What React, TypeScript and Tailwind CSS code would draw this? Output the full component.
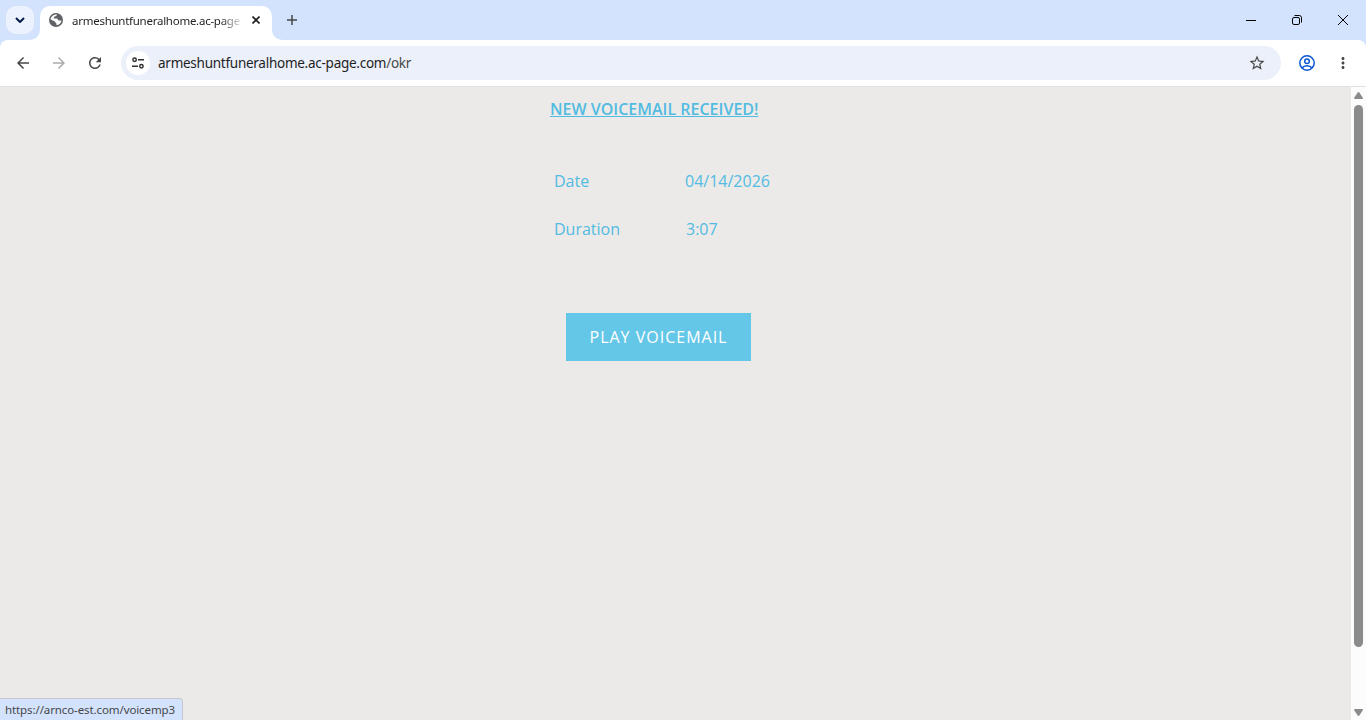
import {
  MdArrowBack,
  MdArrowForward,
  MdMoreVert,
  MdRefresh,
  MdStarOutline,
} from "react-icons/md";

type Voicemail = {
  date: string;
  duration: string;
};

const voicemail: Voicemail = {
  date: "04/14/2026",
  duration: "3:07",
};

function GlobeIcon() {
  return (
    <svg className="mt-1.5 size-4 shrink-0" viewBox="0 0 16 16">
      <circle cx="8" cy="8" r="7" fill="#5f6368" />
      <path
        d="M9 2.600C8.800 4 7.800 4.300 6.600 4.600C5.700 5 6.100 6 5.500 6.600H8.600C10 6.700 9.600 8.200 10.800 8.400H13.400C13.200 10.800 11.200 13 8.500 13.300V12C8.500 11 7.600 11.200 7.300 10.300C7 9.300 6 8.800 4.600 8.500L2.600 7.200C2.900 4.800 5.400 2.400 9 2.600z"
        fill="#fff"
      />
      <path d="M9.500 3C11.500 3.600 13 5.300 13.300 7H11.200C10.400 6.600 11 5.800 10 5.500C8.800 5 9.300 3.800 9.500 3z" fill="#5f6368" />
    </svg>
  );
}

function TabStrip() {
  return (
    <div className="flex h-10 bg-[#d3e3fd] pl-1.5 pt-1.5">
      <div className="flex size-7 items-center justify-center rounded-[10px] bg-[#ecf2fe]">
        <svg width="10" height="6" viewBox="0 0 10 6" fill="none" stroke="#041e49" strokeWidth="2">
          <path d="M1 1l4 4 4-4" />
        </svg>
      </div>
      <div className="relative ml-1.5 flex h-[34px] w-[232px] rounded-t-[10px] bg-white pl-2">
        <svg className="absolute -left-2.5 bottom-0 fill-white" width="10" height="10">
          <path d="M10 0v10H0A10 10 0 0 0 10 0z" />
        </svg>
        <svg className="absolute -right-2.5 bottom-0 fill-white" width="10" height="10">
          <path d="M0 0v10h10A10 10 0 0 1 0 0z" />
        </svg>
        <GlobeIcon />
        <div className="ml-2 w-[168px] mask-r-from-[148px] mask-r-to-[172px] whitespace-nowrap text-[11.5px] leading-[29px] tracking-[-0.26px] text-[#1f1f1f]">
          armeshuntfuneralhome.ac-page
        </div>
        <svg className="ml-[12px] mt-2.5" width="8" height="8" viewBox="0 0 8 8" stroke="#1f1f1f" strokeWidth="1.6">
          <path d="M.5.5l7 7m0-7l-7 7" />
        </svg>
      </div>
      <svg className="ml-[15px] mt-[9px]" width="10" height="10" stroke="#474747" strokeWidth="1.5">
        <path d="M5 0v10M0 5h10" />
      </svg>
      <div className="ml-auto flex items-start gap-9 pr-[18px] pt-[9px]">
        <svg width="10" height="10" stroke="#000">
          <path d="M0 5.5h10" />
        </svg>
        <svg width="10" height="10" fill="none" stroke="#000">
          <rect x=".5" y="2.5" width="7" height="7" rx="1.5" />
          <path d="M2.5.5h4.8a2.2 2.2 0 0 1 2.2 2.2v4.8" />
        </svg>
        <svg width="10" height="10" stroke="#000">
          <path d="M0 0l10 10M10 0L0 10" />
        </svg>
      </div>
    </div>
  );
}

function Toolbar() {
  return (
    <div className="bg-[#d3e3fd]">
      <div className="flex h-[47px] items-start rounded-t-[8px] border-b border-[#dfe1e0] bg-white pt-1.5 text-[#474747]">
        <div className="flex h-[34px] items-center gap-[18px] pl-[14px]">
          <MdArrowBack className="size-[18px]" />
          <MdArrowForward className="size-[18px] text-[#ababab]" />
          <MdRefresh className="size-[18px]" />
        </div>
        <div className="ml-[17px] flex h-[34px] w-[1160px] items-center rounded-full bg-[#ebf0fa] pl-[5px] pr-[15px]">
          <div className="flex size-6 items-center justify-center rounded-full bg-white">
            <svg width="12" height="12" viewBox="0 0 12 12" fill="none" stroke="#303030" strokeWidth="1.5">
              <circle cx="2.6" cy="2.8" r="1.7" />
              <path d="M6 2.8h6M0 9.2h6" />
              <circle cx="9.4" cy="9.2" r="1.7" />
            </svg>
          </div>
          <span className="ml-2 text-[13.5px] leading-5 tracking-[-0.26px] text-[#1f1f1f]">
            armeshuntfuneralhome.ac-page.com<span className="text-[#474747]">/okr</span>
          </span>
          <MdStarOutline className="ml-auto size-[18px]" />
        </div>
        <div className="ml-auto flex h-[34px] items-center gap-[19px] pr-[14px]">
          <svg width="16" height="16" viewBox="0 0 16 16" fill="none" stroke="#0b57d0" strokeWidth="1.5">
            <circle cx="8" cy="8" r="7.2" />
            <circle cx="8" cy="6.3" r="2.3" />
            <path d="M3 13c1.200-1.600 3-2.200 5-2.200s3.800.6 5 2.200" />
          </svg>
          <MdMoreVert className="size-[18px]" />
        </div>
      </div>
    </div>
  );
}

function Scrollbar() {
  return (
    <div className="flex w-[15px] flex-col items-center bg-[#fcfcfc]">
      <svg className="mt-[5px] shrink-0 fill-[#8b8b8b]" width="9" height="7">
        <path d="M3.700.6a1 1 0 0 1 1.600 0L9 6q0 1-1 1H1Q0 7 0 6z" />
      </svg>
      <div className="mt-1.5 h-[542px] w-[9px] rounded-full bg-[#8b8b8b]" />
      <svg className="mb-1 mt-auto shrink-0 rotate-180 fill-[#8b8b8b]" width="9" height="7">
        <path d="M3.700.6a1 1 0 0 1 1.600 0L9 6q0 1-1 1H1Q0 7 0 6z" />
      </svg>
    </div>
  );
}

export default function App() {
  return (
    <div className="flex h-[720px] w-[1366px] flex-col overflow-hidden font-['Noto_Sans',sans-serif]">
      <TabStrip />
      <Toolbar />
      <div className="flex flex-1">
        <main className="relative flex-1 bg-[#ebeae8] pl-[550px] pt-2.5 font-['Open_Sans',sans-serif] text-base leading-6 text-[#52bbe2]">
          <h1 className="font-semibold underline">NEW VOICEMAIL RECEIVED!</h1>
          <dl className="mt-12 grid grid-cols-[131px_1fr] gap-y-6 pl-1">
            <dt>Date</dt>
            <dd>{voicemail.date}</dd>
            <dt>Duration</dt>
            <dd className="pl-px">{voicemail.duration}</dd>
          </dl>
          <button
            type="button"
            className="ml-4 mt-[72px] block h-12 w-[185px] bg-[#64c7e8] tracking-[1px] whitespace-nowrap text-white"
          >
            PLAY VOICEMAIL
          </button>
          <div className="absolute bottom-0 left-0 h-[22px] w-[183px] whitespace-nowrap rounded-tr border-r border-t border-[#c8c8cc] bg-[#d3e3fd] pl-[5px] font-['Noto_Sans',sans-serif] text-[11.5px] leading-[21px] tracking-[-0.1px] text-[#474747]">
            https://arnco-est.com/voicemp3
          </div>
        </main>
        <Scrollbar />
      </div>
    </div>
  );
}
